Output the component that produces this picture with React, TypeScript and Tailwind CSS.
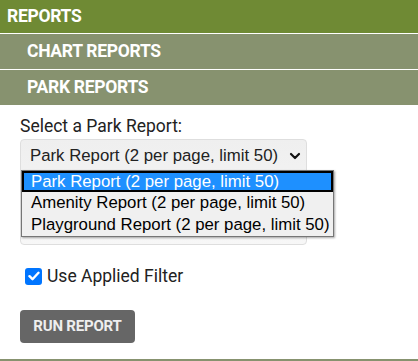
import React from 'react';

const options = [
    'Park Report (2 per page, limit 50)',
    'Amenity Report (2 per page, limit 50)',
    'Playground Report (2 per page, limit 50)',
];

const NavBar: React.FC<{ label: string; sub?: boolean }> = ({ label, sub }) => (
    <div
        className={
            sub
                ? 'h-[36px] bg-[#87926f] pl-[27px] flex items-center text-white font-bold text-[17.5px] tracking-[-0.3px] border-t border-white'
                : 'h-[33px] bg-[#6f8a34] pl-[7px] flex items-center text-white font-bold text-[17.5px] tracking-[-0.3px]'
        }
    >
        {label}
    </div>
);

export default function App() {
    return (
        <div className="w-[418px] h-[361px] bg-white font-['Roboto',sans-serif] flex flex-col">
            <NavBar label="REPORTS" />
            <NavBar label="CHART REPORTS" sub />
            <NavBar label="PARK REPORTS" sub />

            <div className="flex-1 flex flex-col pl-[20px] border-b-2 border-[#87926f]">
                {/* Report picker */}
                <div className="mt-[10px] text-[17.5px] leading-[22px] text-[#222]">Select a Park Report:</div>
                <div className="relative mt-[2px]">
                    <div className="w-[287px] h-[106px] rounded-[4px] border border-[#dedede] bg-gradient-to-b from-[#efefef] to-[#f7f7f7]">
                        <div className="h-[31px] flex items-center justify-between pl-[9px] pr-[5px] whitespace-nowrap font-['Liberation_Sans',Arial,sans-serif] text-[16.8px] text-[#222]">
                            <span>{options[0]}</span>
                            <svg width="12" height="8" viewBox="0 0 12 8" fill="none">
                                <path d="M2 2l4 4 4-4" stroke="#111" strokeWidth="2.2" strokeLinecap="round" strokeLinejoin="round" />
                            </svg>
                        </div>
                    </div>

                    {/* Open option list */}
                    <div className="absolute left-[1px] top-[31px] min-w-[313px] whitespace-nowrap bg-white border border-[#767676] shadow-[1px_1px_2px_rgba(0,0,0,0.35)] font-['Liberation_Sans',Arial,sans-serif] text-[16.8px] text-black">
                        {options.map((o, i) => (
                            <div
                                key={o}
                                className={
                                    i === 0
                                        ? 'h-[21px] flex items-center pl-[7px] bg-[#1e90ff] text-white border-2 border-black'
                                        : 'h-[22px] flex items-center pl-[9px] pr-[1px] bg-[#f0f0f0]'
                                }
                            >
                                {o}
                            </div>
                        ))}
                    </div>
                </div>

                {/* Filter checkbox */}
                <label className="mt-[20px] ml-[5px] h-[22px] flex items-center gap-[5px] text-[17.5px] text-[#222]">
                    <span className="w-[17px] h-[17px] rounded-[3px] bg-[#0075ff] flex items-center justify-center">
                        <svg width="12" height="10" viewBox="0 0 12 10" fill="none">
                            <path d="M1.5 5.2l3 3L10.5 1.8" stroke="white" strokeWidth="2.4" strokeLinecap="round" strokeLinejoin="round" />
                        </svg>
                    </span>
                    Use Applied Filter
                </label>

                <button className="mt-[23px] w-[115px] h-[33px] rounded-[4px] bg-[#666666] text-[#eeeeee] font-bold text-[15px] tracking-[-0.2px]">
                    RUN REPORT
                </button>
            </div>
        </div>
    );
}
